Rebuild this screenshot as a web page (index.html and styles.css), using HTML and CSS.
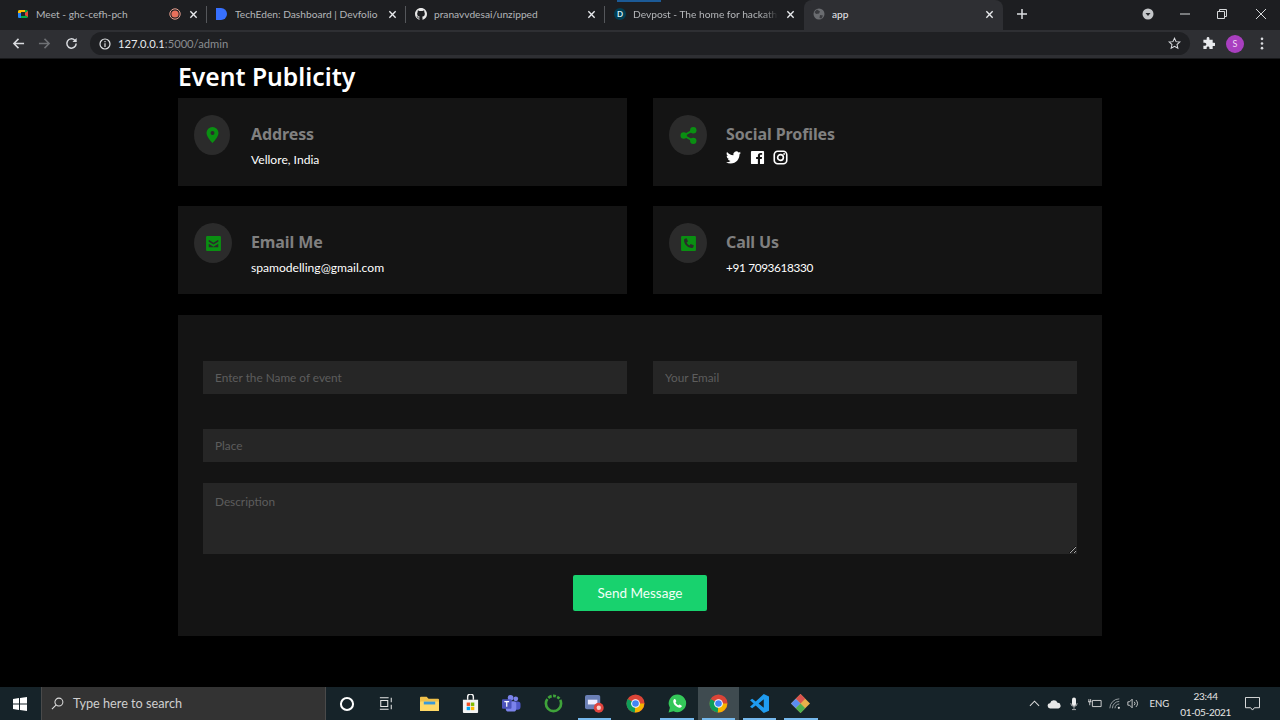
FILE: index.html
```html
<!DOCTYPE html>
<html lang="en">
<head>
<meta charset="utf-8">
<title>app</title>
<link rel="stylesheet" href="styles.css">
</head>
<body>
<div class="app">
  <header class="tabstrip">
    <div class="loading"></div>
    <div class="tab sep">
      <svg class="fav" viewBox="0 0 12 12"><rect x="1" y="2" width="10" height="8" rx="1.5" fill="#00ac47"/><path d="M1 3.5A1.5 1.5 0 0 1 2.500 2H8v3H1z" fill="#ffba00"/><path d="M1 5h3v5H2.500A1.500 1.500 0 0 1 1 8.500z" fill="#2684fc"/><rect x="4" y="4" width="4" height="4" fill="#20242a"/><path d="M8 5l3-2v6L8 7z" fill="#ea4335"/></svg>
      <span class="tab-title">Meet - ghc-cefh-pch</span>
      <svg class="rec" viewBox="0 0 12 12"><circle cx="6" cy="6" r="5.200" fill="none" stroke="#e8a090" stroke-width="1"/><circle cx="6" cy="6" r="3.600" fill="#e8705c"/></svg>
      <svg class="close" viewBox="0 0 10 10"><path d="M1.500 1.500l7 7M8.500 1.500l-7 7"/></svg>
    </div>
    <div class="tab sep">
      <svg class="fav tall" viewBox="0 0 12 14"><path d="M0 1h5a6 6 0 0 1 0 12H0z" fill="#3770ff"/></svg>
      <span class="tab-title">TechEden: Dashboard | Devfolio</span>
      <svg class="close" viewBox="0 0 10 10"><path d="M1.500 1.500l7 7M8.500 1.500l-7 7"/></svg>
    </div>
    <div class="tab sep">
      <svg class="fav" viewBox="0 0 16 16"><path fill="#e8e8e8" d="M8 0C3.580 0 0 3.580 0 8c0 3.540 2.290 6.530 5.470 7.590.4.070.55-.17.55-.38v-1.340c-2.230.48-2.700-1.070-2.700-1.070-.36-.92-.89-1.170-.89-1.170-.73-.5.050-.49.050-.49.800.060 1.230.830 1.230.830.710 1.220 1.870.870 2.330.660.070-.520.280-.870.500-1.070-1.780-.2-3.640-.890-3.640-3.950 0-.870.310-1.590.820-2.150-.080-.2-.360-1.020.080-2.120 0 0 .670-.210 2.200.820a7.600 7.600 0 0 1 4 0c1.530-1.040 2.200-.820 2.200-.820.440 1.100.160 1.920.080 2.120.510.560.820 1.270.820 2.150 0 3.070-1.870 3.750-3.650 3.950.290.250.540.730.540 1.480v2.200c0 .210.150.460.550.380A8 8 0 0 0 16 8c0-4.420-3.580-8-8-8z"/></svg>
      <span class="tab-title">pranavvdesai/unzipped</span>
      <svg class="close" viewBox="0 0 10 10"><path d="M1.500 1.500l7 7M8.500 1.500l-7 7"/></svg>
    </div>
    <div class="tab">
      <span class="fav-d">D</span>
      <span class="tab-title fade">Devpost - The home for hackathons</span>
      <svg class="close" viewBox="0 0 10 10"><path d="M1.500 1.500l7 7M8.500 1.500l-7 7"/></svg>
    </div>
    <div class="tab active">
      <svg class="fav" viewBox="0 0 12 12"><circle cx="6" cy="6" r="5.500" fill="#6a6c70"/><path d="M4 1.500l3 2-1 2-3 .5-1.500-2zM7 7l3 .5-1.500 3L6.500 10z" fill="#3a3b3f"/></svg>
      <span class="tab-title">app</span>
      <svg class="close" viewBox="0 0 10 10"><path d="M1.500 1.500l7 7M8.500 1.500l-7 7"/></svg>
    </div>
    <svg class="newtab" viewBox="0 0 12 12"><path d="M6 1v10M1 6h10"/></svg>
    <div class="win-controls">
      <svg class="win-drop" viewBox="0 0 12 12"><circle cx="6" cy="6" r="5.500" fill="#c4c6c9"/><path d="M3.500 5h5L6 8z" fill="#26282b"/></svg>
      <svg class="win-btn w-min" viewBox="0 0 10 10"><path d="M0 5h10"/></svg>
      <svg class="win-btn w-max" viewBox="0 0 10 10"><path d="M.5 2.500h7v7h-7zM2.500 2.500V.5h7v7h-2"/></svg>
      <svg class="win-btn w-close" viewBox="0 0 10 10"><path d="M0 0l10 10M10 0L0 10"/></svg>
    </div>
  </header>

  <nav class="toolbar">
    <svg class="tool t-back" viewBox="0 0 14 14"><path d="M13 7H2M7 2L2 7l5 5"/></svg>
    <svg class="tool t-fwd" viewBox="0 0 14 14"><path d="M1 7h11M7 2l5 5-5 5"/></svg>
    <svg class="tool t-reload" viewBox="0 0 14 14"><path d="M12 7a5 5 0 1 1-1.500-3.600L12 5"/><path class="solid" d="M12.500 1v4.500H8z"/></svg>
    <div class="omnibox">
      <svg class="info" viewBox="0 0 12 12"><circle cx="6" cy="6" r="5"/><path d="M6 5.300V9M6 3v1.200"/></svg>
      <span class="url"><b>127.0.0.1</b>:5000/admin</span>
      <svg class="star" viewBox="0 0 14 14"><path d="M7 1.300l1.700 3.700 4 .4-3 2.700.9 4L7 10l-3.600 2.100.9-4-3-2.700 4-.4z"/></svg>
    </div>
    <svg class="ext" viewBox="0 0 14 14"><path d="M5 1.500a1.500 1.500 0 0 1 3 0V3h3.500v3.200H13a1.700 1.700 0 0 1 0 3.400h-1.500V13H8v-1.300a1.500 1.500 0 0 0-3 0V13H1.500V9.500H3a1.700 1.700 0 0 0 0-3.400H1.500V3H5z" fill="#e8eaed"/></svg>
    <span class="avatar">S</span>
    <svg class="menu" viewBox="0 0 4 14"><circle cx="2" cy="2" r="1.400"/><circle cx="2" cy="7" r="1.400"/><circle cx="2" cy="12" r="1.400"/></svg>
  </nav>

  <main class="page">
    <div class="container">
      <h1 class="title">Event Publicity</h1>
      <section class="info-grid">
        <article class="card">
          <div class="bubble">
            <svg class="pin" viewBox="0 0 14 16"><path fill-rule="evenodd" d="M7 0a6 6 0 0 1 6 6c0 4-6 10-6 10S1 10 1 6a6 6 0 0 1 6-6zm0 4a2 2 0 1 0 0 4 2 2 0 0 0 0-4z"/></svg>
          </div>
          <div class="card-body">
            <h3 class="card-head">Address</h3>
            <p class="card-text">Vellore, India</p>
          </div>
        </article>
        <article class="card">
          <div class="bubble wide">
            <svg viewBox="0 0 16 16"><circle cx="12.500" cy="3" r="3"/><circle cx="3.500" cy="8" r="3"/><circle cx="12.500" cy="13" r="3"/><path d="M12.500 3l-9 5 9 5" fill="none" stroke="#0a8f12" stroke-width="1.800"/></svg>
          </div>
          <div class="card-body">
            <h3 class="card-head">Social Profiles</h3>
            <div class="socials">
              <svg viewBox="0 0 24 24"><path fill="#fff" d="M23.950 4.570a10 10 0 0 1-2.820.780 4.960 4.960 0 0 0 2.160-2.720c-.950.550-2 .950-3.130 1.190a4.920 4.920 0 0 0-8.380 4.480C7.690 8.100 4.070 6.130 1.640 3.160a4.820 4.820 0 0 0-.670 2.480c0 1.710.870 3.210 2.190 4.100a4.900 4.900 0 0 1-2.230-.620v.060a4.920 4.920 0 0 0 3.950 4.830 5 5 0 0 1-2.210.080 4.940 4.940 0 0 0 4.600 3.420A9.870 9.870 0 0 1 0 19.540a14 14 0 0 0 7.560 2.210c9.050 0 14-7.500 14-13.980 0-.210 0-.420-.020-.630a9.940 9.940 0 0 0 2.410-2.550z"/></svg>
              <svg viewBox="0 0 24 24"><path fill="#fff" d="M3 1.500h18A1.500 1.500 0 0 1 22.500 3v18a1.500 1.500 0 0 1-1.500 1.500h-5v-8h2.800l.5-3.300H16V9.400c0-1 .4-1.700 1.800-1.700h1.600V4.800c-.7-.1-1.500-.2-2.400-.2-2.600 0-4.400 1.600-4.400 4.400v2.200h-2.800v3.300h2.800v8H3A1.500 1.500 0 0 1 1.500 21V3A1.500 1.500 0 0 1 3 1.500z"/></svg>
              <svg viewBox="0 0 24 24"><rect x="2" y="2" width="20" height="20" rx="5.500" fill="none" stroke="#fff" stroke-width="2.600"/><circle cx="12" cy="12" r="4.600" fill="none" stroke="#fff" stroke-width="2.600"/><circle cx="17.800" cy="6.200" r="1.500" fill="#fff"/></svg>
            </div>
          </div>
        </article>
        <article class="card">
          <div class="bubble wide">
            <svg viewBox="0 0 16 16"><path fill-rule="evenodd" d="M2 1h12a1 1 0 0 1 1 1v12a1 1 0 0 1-1 1H2a1 1 0 0 1-1-1V2a1 1 0 0 1 1-1zm1.500 3.500v1.800L8 9l4.500-2.700V4.500L8 7.200zm0 3.800v3.200h9V8.300L8 11z"/></svg>
          </div>
          <div class="card-body">
            <h3 class="card-head">Email Me</h3>
            <p class="card-text">spamodelling@gmail.com</p>
          </div>
        </article>
        <article class="card">
          <div class="bubble wide">
            <svg viewBox="0 0 16 16"><path fill-rule="evenodd" d="M2 1h12a1 1 0 0 1 1 1v12a1 1 0 0 1-1 1H2a1 1 0 0 1-1-1V2a1 1 0 0 1 1-1zm2.500 2.500L6.300 3l1.200 3-1.300 1c.6 1.300 1.500 2.200 2.800 2.800l1-1.300 3 1.200-.5 1.800c-.2.500-.6.700-1.200.7C7 12 4 9 3.800 4.700c0-.6.200-1 .7-1.200z"/></svg>
          </div>
          <div class="card-body">
            <h3 class="card-head">Call Us</h3>
            <p class="card-text phone">+91 7093618330</p>
          </div>
        </article>
      </section>
      <form class="form">
        <div class="form-row two">
          <input class="field" type="text" placeholder="Enter the Name of event">
          <input class="field" type="email" placeholder="Your Email">
        </div>
        <div class="form-row">
          <input class="field" type="text" placeholder="Place">
        </div>
        <textarea class="field area" placeholder="Description"></textarea>
        <div class="actions"><button class="send" type="button">Send Message</button></div>
      </form>
    </div>
  </main>

  <footer class="taskbar">
    <div class="start"><svg viewBox="0 0 14 14"><path d="M0 2l6-.9v5.500H0zM7 1l7-1v6.600H7zM0 7.400h6v5.500L0 12zM7 7.400h7V14l-7-1z" fill="#fff"/></svg></div>
    <div class="search">
      <svg viewBox="0 0 14 14"><circle cx="8.500" cy="5.500" r="4.300"/><path d="M5.300 8.700L1 13"/></svg>
      <span>Type here to search</span>
    </div>
    <div class="task-icons">
      <div class="task"><svg class="cortana" viewBox="0 0 14 14"><circle cx="7" cy="7" r="5.300" fill="none" stroke="#fff" stroke-width="1.800"/></svg></div>
      <div class="task"><svg class="taskview" viewBox="0 0 16 14"><path d="M1 .5h10M1 13.500h10M2 3.500h8v7H2zM14 .5v5M14 8.500v5" fill="none" stroke="#e6e6e6" stroke-width="1.200"/></svg></div>
      <div class="task"><svg viewBox="0 0 20 16"><path d="M0 2a1 1 0 0 1 1-1h6l2 2h10a1 1 0 0 1 1 1v11a1 1 0 0 1-1 1H1a1 1 0 0 1-1-1z" fill="#f0c04a"/><rect y="6" width="20" height="10" rx="1" fill="#ffd966"/><rect x="4" y="6" width="12" height="3" fill="#3a9ad9"/></svg></div>
      <div class="task"><svg viewBox="0 0 18 20"><path d="M1 6h16v13a1 1 0 0 1-1 1H2a1 1 0 0 1-1-1z" fill="#f3f3f3"/><path d="M6 6V3a3 3 0 0 1 6 0v3" fill="none" stroke="#f3f3f3" stroke-width="1.500"/><rect x="5" y="9" width="3.600" height="3.600" fill="#f25022"/><rect x="9.400" y="9" width="3.600" height="3.600" fill="#7fba00"/><rect x="5" y="13.400" width="3.600" height="3.600" fill="#00a4ef"/><rect x="9.400" y="13.400" width="3.600" height="3.600" fill="#ffb900"/></svg></div>
      <div class="task"><svg viewBox="0 0 20 20"><circle cx="14.500" cy="5" r="2.500" fill="#7b83eb"/><rect x="11" y="8" width="8.500" height="8.500" rx="3" fill="#5059c9"/><circle cx="9" cy="4" r="3" fill="#7b83eb"/><rect x="4" y="7.500" width="11" height="11" rx="3" fill="#7b83eb"/><rect x="0" y="5.500" width="10" height="10" rx="1" fill="#4b53bc"/><path d="M2.500 8h5M5 8v5.500" stroke="#fff" stroke-width="1.300"/></svg></div>
      <div class="task"><svg viewBox="0 0 20 20"><circle cx="10" cy="10" r="8" fill="none" stroke="#3fa33a" stroke-width="2.800" stroke-dasharray="30 1.500 4 1.500 3 1.500 3 1.500"/></svg></div>
      <div class="task running"><svg viewBox="0 0 20 20"><rect x="0" y="1" width="16" height="15" rx="2" fill="#6a7fb5"/><path d="M3 6h10v5H3z" fill="#eef"/><circle cx="14.500" cy="14.500" r="5.200" fill="#e0443e"/><circle cx="14.500" cy="14.500" r="2.300" fill="#f6d0cc"/></svg></div>
      <div class="task"><svg class="chrome" viewBox="0 0 20 20"><use href="#chrome"/></svg></div>
      <div class="task running"><svg viewBox="0 0 20 20"><path d="M10 .5a9.300 9.300 0 0 0-8 14L.6 19.500l5.200-1.300A9.300 9.300 0 1 0 10 .5z" fill="#34c759"/><path d="M6.500 5.500c1-.8 1.500 0 2.200 1.800.2.600-.8 1.200-.7 1.600.5 1.300 2 2.600 3.100 3 .5.100 1-.9 1.600-.7 1.700.8 2.300 1.200 1.600 2.200-1.500 2-4.700.7-6.600-1.200S4.600 7 6.500 5.500z" fill="#fff"/></svg></div>
      <div class="task running active-task"><svg viewBox="0 0 20 20"><use href="#chrome"/></svg></div>
      <div class="task running"><svg viewBox="0 0 20 20"><path d="M14.500 0L20 2.500v15L14.500 20 6 12l-3.700 3L0 13.500 3.800 10 0 6.500 2.300 5 6 8zM14.500 5.500L9 10l5.500 4.500z" fill="#1f9cf0"/></svg></div>
      <div class="task running"><svg viewBox="0 0 20 20"><path d="M10 0l10 10-10 10L0 10z" fill="#e8b04b"/><path d="M10 0l5 5-5 5-5-5z" fill="#d9534f"/><path d="M0 10l5-5 5 5-5 5z" fill="#5b8def"/><path d="M10 20l-5-5 5-5 5 5z" fill="#4caf50"/></svg></div>
    </div>
    <div class="tray">
      <svg class="t-chev" viewBox="0 0 12 7"><path d="M1 6l5-5 5 5"/></svg>
      <svg class="t-cloud" viewBox="0 0 16 10"><path d="M4 10a3 3 0 0 1-.5-6A4.500 4.500 0 0 1 12 3.500 3.300 3.300 0 0 1 13 10z" fill="#e8e8e8"/></svg>
      <svg class="t-mic" viewBox="0 0 10 16"><rect x="2.500" y="0" width="5" height="10.500" rx="2.500" fill="#eee"/><path d="M1 7a4 4 0 0 0 8 0M5 11v3M2.500 15h5" stroke="#ccc" fill="none"/></svg>
      <svg class="t-batt" viewBox="0 0 16 12"><path d="M5 2.500h10v7H5zM1 1v3M3 1v3M0 4h4M2 4v4" fill="none" stroke="#e0e0e0"/></svg>
      <svg class="t-wifi" viewBox="0 0 14 14"><path d="M1 12a11 11 0 0 1 11-11M4 12a8 8 0 0 1 8-8M7 12a5 5 0 0 1 5-5" fill="none" stroke="#a8b0b3"/><circle cx="11.500" cy="11.500" r="1.300" fill="#ddd"/></svg>
      <svg class="t-vol" viewBox="0 0 14 12"><path d="M1 4h2l3-3v10L3 8H1zM8.500 4a3 3 0 0 1 0 4M10.500 2a6 6 0 0 1 0 8" fill="none" stroke="#ddd"/></svg>
      <span class="lang">ENG</span>
      <div class="clock"><span>23:44</span><span>01-05-2021</span></div>
      <svg class="t-note" viewBox="0 0 16 15"><path d="M.5.500h15v11H10l-2 2.500-2-2.500H.5z" fill="none" stroke="#e6e6e6"/></svg>
    </div>
  </footer>

  <svg class="defs" width="0" height="0" aria-hidden="true">
    <symbol id="chrome" viewBox="0 0 20 20">
      <circle cx="10" cy="10" r="9.500" fill="#db4437"/>
      <path d="M10 10L1.800 5.200A9.500 9.500 0 0 0 9.300 19.500z" fill="#0f9d58"/>
      <path d="M10 10h9.200a9.500 9.500 0 0 1-9.900 9.500z" fill="#f4b400"/>
      <circle cx="10" cy="10" r="4.600" fill="#fff"/>
      <circle cx="10" cy="10" r="3.500" fill="#4285f4"/>
    </symbol>
  </svg>
</div>
</body>
</html>
```
FILE: styles.css
```css
* { box-sizing: border-box; }
html, body { margin: 0; height: 100%; background: #000; }
body { font-family: Lato, "Noto Sans", sans-serif; overflow: hidden; }
.app { width: 1280px; height: 720px; display: flex; flex-direction: column; position: relative; }
.defs { position: absolute; }

/* tab strip */
.tabstrip { height: 30px; flex: none; display: flex; align-items: flex-end; padding-left: 8px; background: #1d1e21; position: relative; }
.loading { position: absolute; left: 617px; top: 0; width: 44px; height: 2px; background: #1c5a96; }
.tab { width: 199px; height: 30px; display: flex; align-items: center; padding: 0 7px 2px 9px; position: relative; color: #b4b6b9; font-size: 10.200px; }
.tab.sep::after { content: ""; position: absolute; right: 0; top: 6px; height: 17px; width: 1px; background: #55575b; }
.tab.active { background: #2e2f33; border-radius: 8px 8px 0 0; color: #e8eaed; }
.fav { width: 12px; height: 12px; flex: none; margin-right: 7px; }
.fav.tall { height: 14px; }
.fav-d { width: 12px; height: 12px; margin-right: 7px; flex: none; border-radius: 50%; background: #003e54; color: #d5eef6; font-size: 8px; font-weight: 700; line-height: 12px; text-align: center; }
.tab-title { flex: 1; white-space: nowrap; overflow: hidden; }
.tab-title.fade { -webkit-mask-image: linear-gradient(90deg, #000 90%, transparent); mask-image: linear-gradient(90deg, #000 90%, transparent); }
.rec { width: 12px; height: 12px; flex: none; }
.close { width: 9px; height: 9px; flex: none; margin: 0 2px 0 8px; fill: none; stroke: #e8eaed; stroke-width: 1.500; }
.newtab { width: 12px; height: 12px; margin: 0 0 10px 13px; fill: none; stroke: #dcdee1; stroke-width: 1.500; flex: none; }
.win-controls { margin-left: auto; display: flex; align-items: center; height: 28px; margin-bottom: 2px; }
.win-drop { width: 12px; height: 12px; margin-right: 26px; }
.win-btn { width: 10px; height: 10px; fill: none; stroke: #d6d8da; stroke-width: 1; }
.w-min { margin-right: 27px; }
.w-max { margin-right: 29px; }
.w-close { margin-right: 14px; }

/* toolbar */
.toolbar { height: 29px; flex: none; display: flex; align-items: center; background: #2e2f33; border-bottom: 1px solid #17181a; padding: 0 0 1px 12px; }
.tool { width: 13px; height: 13px; flex: none; fill: none; stroke: #dadce0; stroke-width: 1.600; }
.t-fwd { margin-left: 13px; stroke: #6f7175; }
.t-reload { margin-left: 14px; }
.solid { fill: #dadce0; stroke: none; }
.omnibox { width: 1100px; margin-left: 12px; height: 23px; flex: none; border-radius: 12px; background: #1f2023; display: flex; align-items: center; padding: 0 9px; font-size: 11.200px; color: #8a8c90; }
.info { width: 12px; height: 12px; margin-right: 7px; fill: none; stroke: #e0e2e5; stroke-width: 1.200; flex: none; }
.url { margin-bottom: 1px; }
.url b { font-weight: 400; color: #e8eaed; }
.star { width: 13px; height: 13px; margin-left: auto; fill: none; stroke: #dadce0; stroke-width: 1.100; }
.ext { width: 13px; height: 13px; margin-left: 12px; flex: none; }
.avatar { width: 18px; height: 18px; margin-left: 11px; flex: none; border-radius: 50%; background: #a93fc0; color: #f0d8f5; font-size: 9px; line-height: 18px; text-align: center; }
.menu { width: 4px; height: 13px; margin-left: 16px; flex: none; fill: #dadce0; }

/* page */
.page { flex: 1; min-height: 0; background: #000; color: #fff; }
.container { width: 924px; margin: 0 auto; }
.title { margin: 0; height: 39px; font-family: "Noto Sans", sans-serif; font-size: 24.700px; font-weight: 600; line-height: 35px; color: #fff; }
.info-grid { display: grid; grid-template-columns: 449px 449px; column-gap: 26px; row-gap: 20px; }
.card { background: #141414; height: 88px; padding: 17px 16px 0; display: flex; }
.bubble { width: 36px; height: 40px; flex: none; border-radius: 50%; background: #2b2b2b; display: flex; align-items: center; justify-content: center; margin-right: 21px; }
.bubble.wide { width: 38px; margin-right: 19px; }
.bubble svg { width: 17px; height: 17px; fill: #0a8f12; }
.bubble .pin { width: 15px; height: 16px; }
.card-head { margin: 0; font-family: "Noto Sans", sans-serif; font-size: 16px; line-height: 24px; font-weight: 700; color: #808080; padding-top: 7px; letter-spacing: -.1px; }
.card-text { margin: 4px 0 0; font-size: 12.100px; line-height: 20px; color: #fff; }
.card-text.phone { letter-spacing: -.35px; font-size: 11.800px; }
.socials { display: flex; gap: 8.500px; margin-top: 4px; }
.socials svg { width: 15px; height: 15px; }

/* form */
.form { margin-top: 21px; height: 321px; background: #141414; padding: 46px 25px 0; }
.form-row { margin-bottom: 21px; }
.form-row.two { display: grid; grid-template-columns: 424px 424px; column-gap: 26px; margin-bottom: 35px; }
.field { display: block; width: 100%; height: 33px; border: 0; outline: 0; padding: 0 12px; background: #262626; color: #fff; font: 11.800px Lato, "Noto Sans", sans-serif; border-radius: 0; }
.field::placeholder { color: #5d5d5d; opacity: 1; }
.area { height: 71px; padding: 11px 12px; resize: vertical; line-height: 16px; }
.actions { display: flex; justify-content: center; margin-top: 21px; }
.send { width: 134px; height: 36px; border: 0; border-radius: 2px; background: #18d26e; color: #f2fff7; font: 13.500px Lato, "Noto Sans", sans-serif; }

/* taskbar */
.taskbar { height: 33px; flex: none; display: flex; align-items: center; background: #162329; color: #e6e6e6; }
.start { width: 41px; height: 33px; display: flex; align-items: center; justify-content: center; flex: none; padding-right: 2px; }
.start svg { width: 14px; height: 14px; }
.search { width: 285px; height: 33px; flex: none; background: #333; border-left: 1px solid #4a4a4a; border-right: 1px solid #4a4a4a; display: flex; align-items: center; padding: 0 0 1px 9px; font-size: 12.700px; color: #cfcfcf; }
.search svg { width: 13px; height: 13px; fill: none; stroke: #ddd; stroke-width: 1.100; margin-right: 9px; flex: none; }
.task-icons { display: flex; flex: none; }
.task { width: 41.300px; height: 33px; display: flex; align-items: center; justify-content: center; position: relative; flex: none; }
.task svg { width: 19px; height: 19px; }
.task .cortana { width: 16px; height: 16px; }
.task .taskview { width: 14px; height: 13px; margin-right: 3px; }
.task.running::after { content: ""; position: absolute; left: 4px; right: 4px; bottom: 0; height: 2px; background: #76b9ed; }
.active-task { background: #3f4b50; }
.tray { margin-left: auto; display: flex; align-items: center; height: 33px; }
.tray svg { flex: none; }
.t-chev { width: 11px; height: 7px; fill: none; stroke: #ddd; stroke-width: 1.100; margin-right: 7px; }
.t-cloud { width: 14px; height: 10px; margin-right: 9px; }
.t-mic { width: 8px; height: 14px; margin-right: 10px; }
.t-batt { width: 14px; height: 11px; margin-right: 7px; }
.t-wifi { width: 12px; height: 12px; margin-right: 6px; }
.t-vol { width: 12px; height: 11px; margin-right: 10px; }
.lang { font-size: 9.500px; margin-right: 11px; }
.clock { display: flex; flex-direction: column; align-items: center; font-size: 10px; letter-spacing: -.3px; line-height: 16px; margin-right: 14px; }
.t-note { width: 15px; height: 14px; margin-right: 20px; }
```
